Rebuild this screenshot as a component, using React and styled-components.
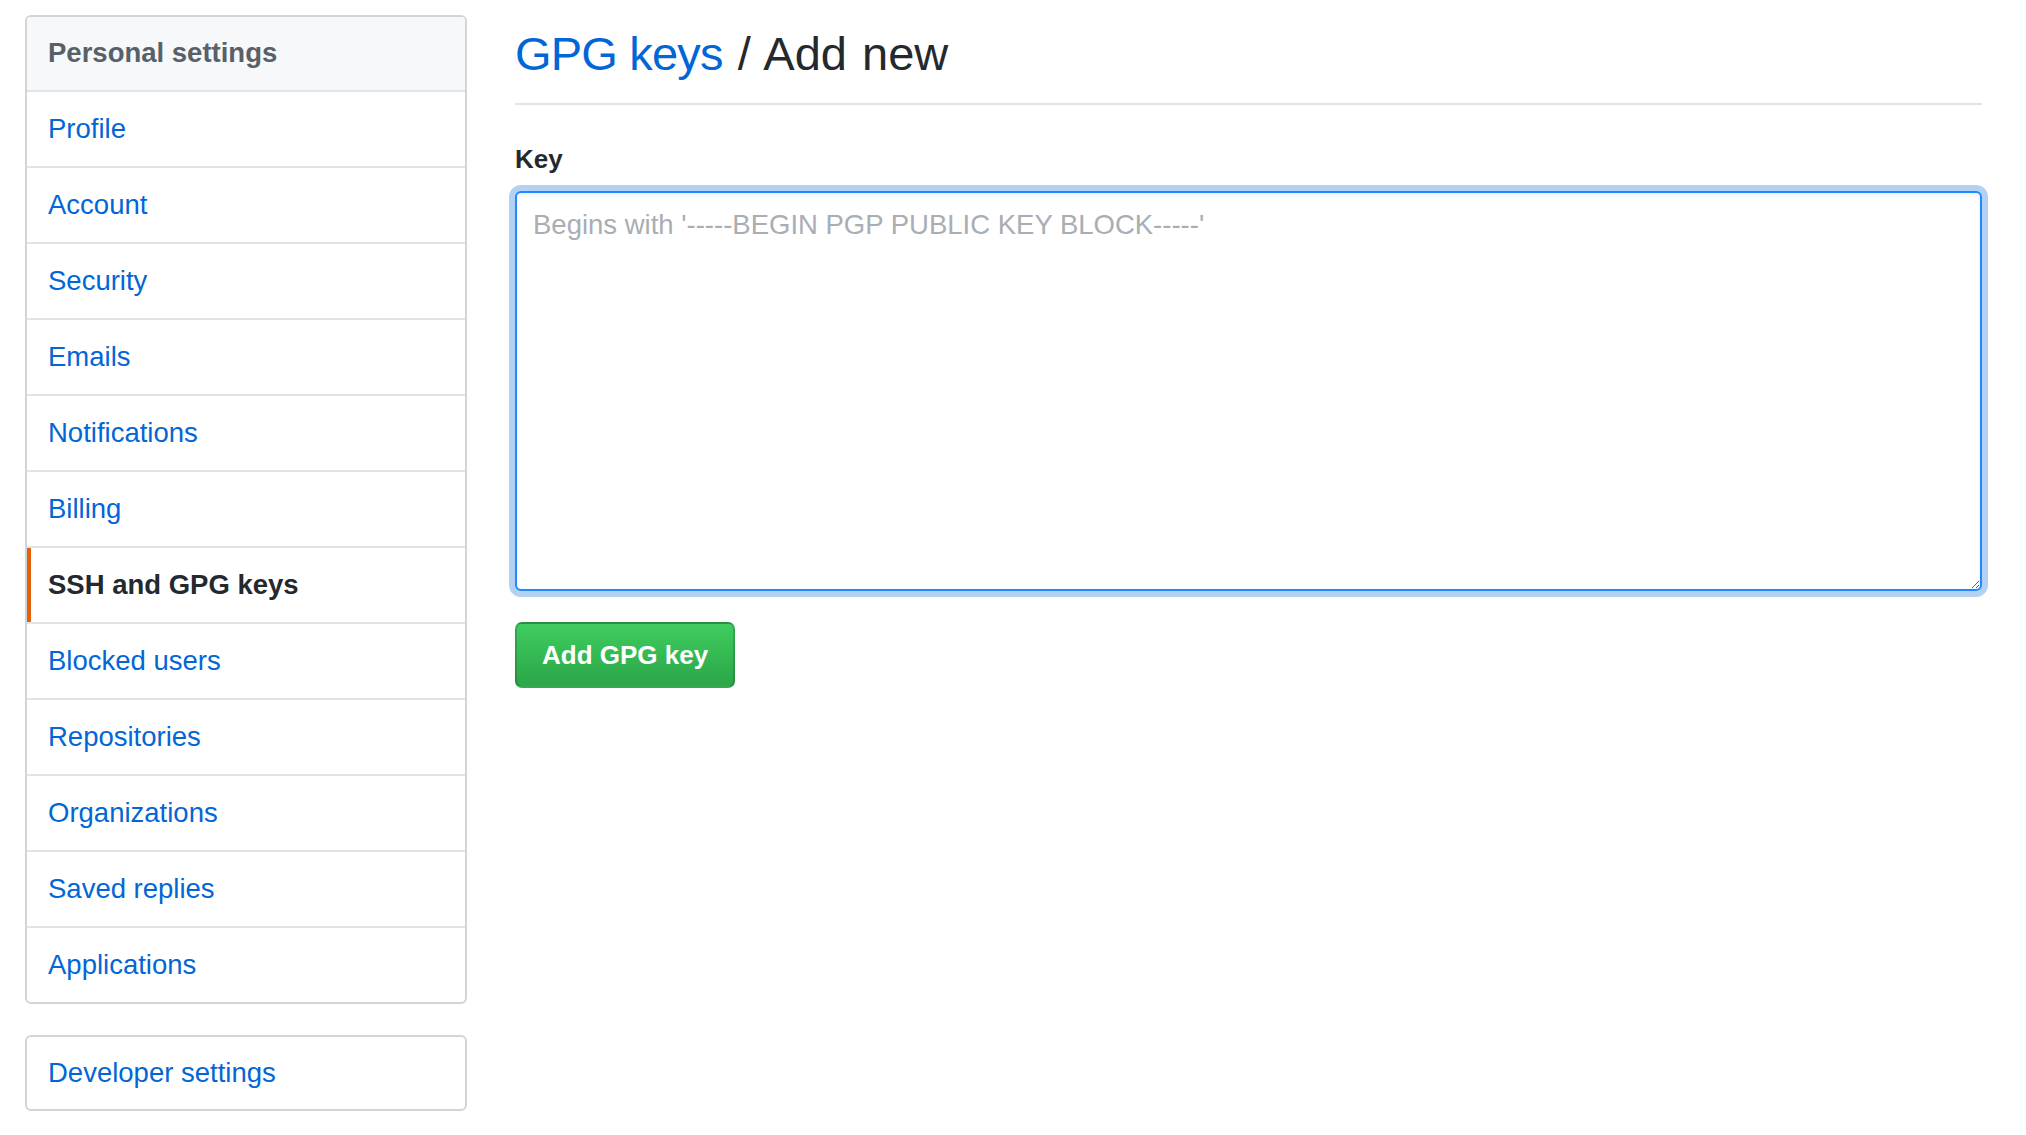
import React from 'react';
import styled, { createGlobalStyle } from 'styled-components';

const GlobalStyle = createGlobalStyle`
  html, body {
    margin: 0;
    padding: 0;
    background: #ffffff;
  }
  body {
    font-family: "Liberation Sans", Arial, Helvetica, sans-serif;
    color: #24292e;
    -webkit-font-smoothing: antialiased;
  }
  * {
    box-sizing: border-box;
  }
`;

const Page = styled.div`
  display: flex;
  align-items: flex-start;
  gap: 48px;
  padding: 15px 44px 0 25px;
`;

const Sidebar = styled.nav`
  width: 442px;
  flex-shrink: 0;
  display: flex;
  flex-direction: column;
  gap: 31px;
`;

const Menu = styled.div`
  border: 2px solid #d1d5da;
  border-radius: 6px;
  overflow: hidden;
  display: flex;
  flex-direction: column;
`;

const MenuHeading = styled.div`
  padding: 15px 21px 16px;
  line-height: 42px;
  font-size: 27.5px;
  font-weight: 700;
  color: #586069;
  background: #f6f8fa;
  border-bottom: 2px solid #e1e4e8;
`;

const MenuItem = styled.a`
  display: block;
  padding: ${props => props.$compact ? '15px 21px' : '16px 21px'};
  line-height: 42px;
  font-size: 27.5px;
  text-decoration: none;
  cursor: pointer;
  color: ${props => props.$selected ? '#24292e' : '#0366d6'};
  font-weight: ${props => props.$selected ? 700 : 400};
  box-shadow: ${props => props.$selected ? 'inset 4px 0 0 #e36209' : 'none'};
  border-bottom: 2px solid #e1e4e8;

  &:last-child {
    border-bottom: none;
  }
`;

const Main = styled.main`
  flex: 1;
  min-width: 0;
`;

const Subhead = styled.div`
  padding-bottom: 10px;
  border-bottom: 2px solid #e1e4e8;
  margin-bottom: 35px;
`;

const Heading = styled.h2`
  margin: 0;
  font-size: 47px;
  font-weight: 400;
  line-height: 78px;
  word-spacing: 2px;
  color: #24292e;
`;

const Crumb = styled.a`
  color: #0366d6;
  text-decoration: none;
  letter-spacing: -0.8px;
  word-spacing: 0;
`;

const FormGroup = styled.div`
  display: flex;
  flex-direction: column;
`;

const Label = styled.label`
  font-size: 26px;
  font-weight: 700;
  line-height: 39px;
  margin-bottom: 12px;
  color: #24292e;
`;

const KeyInput = styled.textarea`
  display: block;
  width: 100%;
  height: 400px;
  padding: 12px 16px;
  font-family: "Liberation Sans", Arial, Helvetica, sans-serif;
  font-size: 27.5px;
  line-height: 40px;
  color: #24292e;
  caret-color: #24292e;
  background: #ffffff;
  border: 2px solid #2188ff;
  border-radius: 6px;
  outline: none;
  resize: vertical;
  box-shadow: inset 0 2px 4px rgba(27, 31, 35, 0.075),
    0 0 0 6px rgba(3, 102, 214, 0.3);

  &::placeholder {
    color: #a8aeb4;
  }
`;

const Actions = styled.div`
  margin-top: 31px;
`;

const PrimaryButton = styled.button`
  height: 66px;
  padding: 0 25px;
  font-family: "Liberation Sans", Arial, Helvetica, sans-serif;
  font-size: 26px;
  font-weight: 700;
  color: #ffffff;
  background: linear-gradient(-180deg, #3fcd5f 0%, #2ea94a 90%);
  border: 2px solid rgba(27, 31, 35, 0.2);
  border-radius: 7px;
  cursor: pointer;
`;

const navItems = [
  'Profile',
  'Account',
  'Security',
  'Emails',
  'Notifications',
  'Billing',
  'SSH and GPG keys',
  'Blocked users',
  'Repositories',
  'Organizations',
  'Saved replies',
  'Applications',
];

const App = () => {
  return (
    <>
      <GlobalStyle />
      <Page>
        <Sidebar>
          <Menu>
            <MenuHeading>Personal settings</MenuHeading>
            {navItems.map(item => (
              <MenuItem key={item} $selected={item === 'SSH and GPG keys'}>
                {item}
              </MenuItem>
            ))}
          </Menu>
          <Menu>
            <MenuItem $compact>Developer settings</MenuItem>
          </Menu>
        </Sidebar>

        <Main>
          <Subhead>
            <Heading>
              <Crumb href="#gpg">GPG keys</Crumb> / Add new
            </Heading>
          </Subhead>

          <FormGroup>
            <Label htmlFor="gpg-key">Key</Label>
            <KeyInput
              id="gpg-key"
              autoFocus
              placeholder="Begins with '-----BEGIN PGP PUBLIC KEY BLOCK-----'"
            />
          </FormGroup>

          <Actions>
            <PrimaryButton type="button">Add GPG key</PrimaryButton>
          </Actions>
        </Main>
      </Page>
    </>
  );
};

export default App;
